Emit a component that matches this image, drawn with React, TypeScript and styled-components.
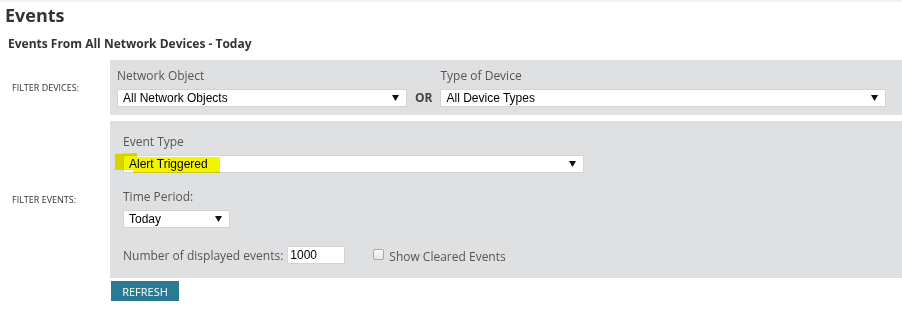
import React from 'react';
import styled, { createGlobalStyle } from 'styled-components';

const GlobalStyle = createGlobalStyle`
	body {
		margin: 0;
		background: #fff;
		font-family: "Open Sans", "Liberation Sans", sans-serif;
	}
`;

const Page = styled.div`
	border-top: 2px solid #f4f4f4;
	padding-top: 1px;
`;

const Title = styled.h1`
	margin: 0 0 0 5px;
	font-size: 18px;
	line-height: 24px;
	font-weight: 700;
	color: #333;
`;

const Subtitle = styled.h2`
	margin: 9px 0 0 8px;
	font-size: 12px;
	line-height: 16px;
	font-weight: 700;
	color: #333;
`;

const FilterTable = styled.div`
	margin-top: 8px;
	display: grid;
	grid-template-columns: 110px 1fr;
	row-gap: 6px;
`;

const RowLabel = styled.div`
	display: flex;
	align-items: center;
	padding-left: 12px;
	font-size: 9px;
	color: #333;
	text-transform: uppercase;
`;

const Panel = styled.div<{ $pad: string }>`
	position: relative;
	background: #dfe0e2;
	padding: ${({ $pad }): string => $pad};
`;

const DeviceRow = styled.div`
	display: flex;
	align-items: flex-end;
	gap: 8px;
`;

const Field = styled.div<{ $width?: number; $mt?: number }>`
	display: flex;
	flex-direction: column;
	gap: 5px;
	flex: ${({ $width }): string => ($width ? `0 0 ${$width}px` : '1')};
	margin-top: ${({ $mt }): number => $mt ?? 0}px;
`;

const FieldLabel = styled.div`
	font-size: 12px;
	line-height: 16px;
	color: #555;
`;

const Or = styled.div`
	height: 18px;
	line-height: 18px;
	font-size: 12px;
	font-weight: 700;
	color: #444;
`;

const SelectBox = styled.div<{ $width?: number }>`
	box-sizing: border-box;
	height: 18px;
	width: ${({ $width }): string => ($width ? `${$width}px` : '100%')};
	display: flex;
	align-items: center;
	justify-content: space-between;
	padding: 0 7px 0 5px;
	background: #fff;
	border: 1px solid #d4d4d4;
	font-family: "Liberation Sans", Arial, sans-serif;
	font-size: 12px;
	color: #000;
`;

const Arrow = (): React.ReactElement => (
	<svg width="7" height="6" viewBox="0 0 7 6">
		<polygon points="0,0 7,0 3.5,6" fill="#111" />
	</svg>
);

const Select = ({ value, width }: { value: string; width?: number }): React.ReactElement => (
	<SelectBox $width={width}>
		<span>{value}</span>
		<Arrow />
	</SelectBox>
);

const EventsColumn = styled.div`
	display: flex;
	flex-direction: column;
`;

const NumberRow = styled.div`
	display: flex;
	align-items: center;
	margin-top: 17px;
	font-size: 12px;
	color: #555;
`;

const NumberInput = styled.input`
	box-sizing: border-box;
	width: 58px;
	height: 18px;
	margin: 0 0 0 4px;
	padding: 0 2px;
	border: 1px solid #d4d4d4;
	background: #fff;
	font-family: "Liberation Sans", Arial, sans-serif;
	font-size: 12px;
	color: #000;
	outline: none;
`;

const CheckLabel = styled.label`
	display: flex;
	align-items: center;
	gap: 5px;
	margin-left: 28px;
	padding-top: 3px;
`;

const Checkbox = styled.span`
	box-sizing: border-box;
	width: 11px;
	height: 11px;
	margin-top: -4px;
	border: 1px solid #a9a9a9;
	border-radius: 2px;
	background: linear-gradient(#fafafa, #e6e6e6);
`;

const Highlight = styled.svg`
	position: absolute;
	left: 0;
	top: 0;
	mix-blend-mode: multiply;
	pointer-events: none;
`;

const RefreshButton = styled.button`
	display: block;
	margin: 3px 0 0 111px;
	width: 68px;
	height: 20px;
	padding: 0;
	border: none;
	background: #2a7a94;
	color: #fff;
	font-family: "Open Sans", sans-serif;
	font-size: 11px;
	text-transform: uppercase;
`;

export default function App(): React.ReactElement {
	return (
		<Page>
			<GlobalStyle />
			<Title>Events</Title>
			<Subtitle>Events From All Network Devices - Today</Subtitle>
			<FilterTable>
				<RowLabel>Filter Devices:</RowLabel>
				<Panel $pad="8px 16px 8px 7px">
					<DeviceRow>
						<Field $width={290}>
							<FieldLabel>Network Object</FieldLabel>
							<Select value="All Network Objects" />
						</Field>
						<Or>OR</Or>
						<Field>
							<FieldLabel>Type of Device</FieldLabel>
							<Select value="All Device Types" />
						</Field>
					</DeviceRow>
				</Panel>
				<RowLabel>Filter Events:</RowLabel>
				<Panel $pad="13px 16px 13px 13px">
					<EventsColumn>
						<Field>
							<FieldLabel>Event Type</FieldLabel>
							<Select value="Alert Triggered" width={461} />
						</Field>
						<Field $mt={16}>
							<FieldLabel>Time Period:</FieldLabel>
							<Select value="Today" width={107} />
						</Field>
						<NumberRow>
							<span>Number of displayed events:</span>
							<NumberInput defaultValue="1000" />
							<CheckLabel>
								<Checkbox />
								<span>Show Cleared Events</span>
							</CheckLabel>
						</NumberRow>
					</EventsColumn>
					<Highlight width="120" height="60" viewBox="0 0 120 60">
						<path d="M5 33 L27 32 L27 49 L5 49 Z" fill="#f4f400" />
						<path d="M23 36 L110 36 L110 52 L23 52 Z" fill="#f4f400" />
					</Highlight>
				</Panel>
			</FilterTable>
			<RefreshButton>Refresh</RefreshButton>
		</Page>
	);
}
